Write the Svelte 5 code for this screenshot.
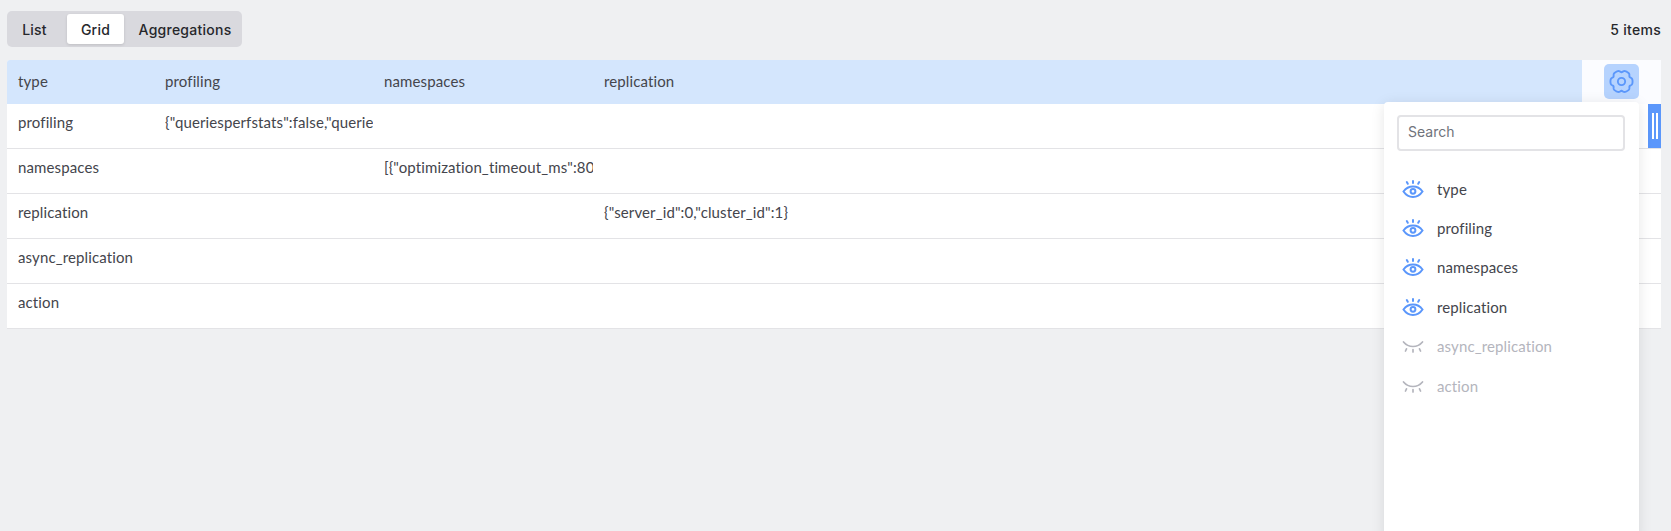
<script lang="ts">
  // columns actually visible in the grid, in display order
  const columns = [
    { name: 'type', visible: true },
    { name: 'profiling', visible: true },
    { name: 'namespaces', visible: true },
    { name: 'replication', visible: true },
    { name: 'async_replication', visible: false },
    { name: 'action', visible: false },
  ]

  const rows = [
    ['profiling', '{"queriesperfstats":false,"querie', '', ''],
    ['namespaces', '', '[{"optimization_timeout_ms":80', ''],
    ['replication', '', '', '{"server_id":0,"cluster_id":1}'],
    ['async_replication', '', '', ''],
    ['action', '', '', ''],
  ]

  let activeTab = $state('Grid')
  const tabs = ['List', 'Grid', 'Aggregations']

  // cog outline: 6 round teeth with narrow notches between them
  const cogPath = (() => {
    const pts: string[] = []
    for (let i = 0; i < 144; i++) {
      const a = (i / 144) * Math.PI * 2
      const notch = Math.pow((1 - Math.cos(a * 6)) / 2, 3)
      const r = 10.6 - 1.7 * notch
      pts.push(`${(12 + r * Math.cos(a)).toFixed(2)} ${(12 + r * Math.sin(a)).toFixed(2)}`)
    }
    return 'M' + pts.join('L') + 'Z'
  })()
</script>

<div class="page">
  <div class="toolbar">
    <div class="tabs">
      {#each tabs as t}
        <button class="tab" class:active={activeTab === t} onclick={() => (activeTab = t)}>{t}</button>
      {/each}
    </div>
    <span class="count">5 items</span>
  </div>

  <div class="table">
    <div class="head">
      <div class="row-grid head-cells">
        {#each columns.filter(c => c.visible) as c}
          <div class="cell">{c.name}</div>
        {/each}
      </div>
      <div class="gear-cell">
        <button class="gear-btn" aria-label="Columns">
          <svg viewBox="0 0 24 24" width="25" height="25" fill="none" stroke="#5b97fb" stroke-width="1.8">
            <path d={cogPath} stroke-linejoin="round" />
            <circle cx="12" cy="12" r="3.500" />
          </svg>
        </button>
      </div>
    </div>

    {#each rows as row}
      <div class="row-grid body-row">
        {#each row as value}
          <div class="cell"><span class="clip">{value}</span></div>
        {/each}
      </div>
    {/each}

    <div class="resize-handle"><i></i><i></i></div>

    <div class="popup">
      <input class="search" placeholder="Search" />
      <ul class="col-list">
        {#each columns as c}
          <li class:off={!c.visible}>
            {#if c.visible}
              <svg viewBox="0 0 22 18" width="22" height="18" fill="none" stroke="#5b97fb" stroke-width="2" stroke-linecap="round">
                <path d="M1.500 11.500C4 8 7.200 6.500 11 6.500s7 1.500 9.500 5C18 15.200 14.800 17 11 17s-7-1.800-9.500-5.500Z" />
                <circle cx="11" cy="11.300" r="2.400" />
                <path d="M11 1v2M4.800 2l1 1.800M17.200 2l-1 1.800" />
              </svg>
            {:else}
              <svg viewBox="0 0 22 18" width="22" height="18" fill="none" stroke="#b4b5bd" stroke-width="1.7" stroke-linecap="round">
                <path d="M1.500 5C4 8 7.200 9.500 11 9.500S18 8 20.500 5" />
                <path d="M11 12.500v2.500M4.500 11.800l-1 2.200M17.500 11.800l1 2.200" />
              </svg>
            {/if}
            <span>{c.name}</span>
          </li>
        {/each}
      </ul>
    </div>
  </div>
</div>

<style>
  :global(body) {
    background: #eff0f2;
    overflow: hidden;
  }

  .page {
    height: 531px;
    overflow: hidden;
    padding: 11px 10px 0 7px;
    box-sizing: border-box;
    font-family: Inter, "Liberation Sans", sans-serif;
    font-size: 14px;
    color: #26272b;
  }

  /* ===== Toolbar ===== */
  .toolbar {
    display: flex;
    align-items: center;
    justify-content: space-between;
    margin-bottom: 13px;
  }

  .tabs {
    display: flex;
    padding: 3px;
    background: #d9d9de;
    border-radius: 5px;
    height: 36px;
    box-sizing: border-box;
  }

  .tab {
    border: none;
    background: none;
    font: inherit;
    font-weight: 500;
    letter-spacing: 0.25px;
    color: #26272b;
    width: 57px;
    padding: 0;
    border-radius: 3px;
  }

  .tab:first-child {
    padding-right: 8px;
  }

  .tab:last-child {
    width: 115px;
    padding-left: 7px;
  }

  .tab.active {
    background: #fff;
    box-shadow: 0 1px 3px rgba(0, 0, 0, 0.12);
  }

  .count {
    font-weight: 500;
    letter-spacing: 0.3px;
  }

  /* ===== Table ===== */
  .table {
    position: relative;
    background: #fff;
    border-radius: 3px 3px 0 0;
    font-family: Lato, sans-serif;
    font-size: 15px;
    letter-spacing: 0.12px;
    color: #44454c;
  }

  .head {
    display: flex;
    height: 44px;
  }

  .row-grid {
    display: grid;
    grid-template-columns: 147px 219px 220px 1fr;
    align-items: start;
  }

  .head-cells {
    flex: 1;
    background: #d4e6fd;
    border-radius: 3px 0 0 0;
    padding-top: 12px;
  }

  .gear-cell {
    width: 79px;
    flex-shrink: 0;
    background: #fbfcff;
    box-sizing: border-box;
    padding: 4px 0 0 22px;
  }

  .gear-btn {
    display: flex;
    align-items: center;
    justify-content: center;
    width: 35px;
    height: 35px;
    padding: 0;
    border: none;
    border-radius: 5px;
    background: #b6d3fe;
  }

  .body-row {
    height: 45px;
    padding-top: 9px;
    border-bottom: 1px solid #e3e3e6;
    box-sizing: border-box;
  }

  .cell {
    padding-left: 11px;
    min-width: 0;
  }

  .clip {
    display: block;
    overflow: hidden;
    white-space: nowrap;
  }

  .resize-handle {
    position: absolute;
    top: 44px;
    right: 0;
    width: 13px;
    height: 44px;
    background: #5b97fb;
    display: flex;
    justify-content: center;
    align-items: center;
    gap: 2px;
  }

  .resize-handle i {
    width: 2px;
    height: 26px;
    background: #fff;
  }

  /* ===== Column popup ===== */
  .popup {
    position: absolute;
    top: 42px;
    right: 22px;
    width: 255px;
    height: 440px;
    box-sizing: border-box;
    padding: 13px 14px 0 13px;
    background: #fff;
    border-radius: 4px;
    box-shadow: 0 2px 14px rgba(0, 0, 0, 0.1);
  }

  .search {
    display: block;
    width: 100%;
    height: 36px;
    box-sizing: border-box;
    padding: 0 9px 3px;
    border: 2px solid #e3e3e6;
    border-radius: 4px;
    font: 14px Inter, sans-serif;
    outline: none;
  }

  .search::placeholder {
    color: #70737b;
  }

  .col-list {
    list-style: none;
    margin: 18px 0 0;
    padding: 0 0 0 5px;
  }

  .col-list li {
    display: flex;
    align-items: center;
    gap: 13px;
    height: 39.400px;
  }

  .col-list li.off {
    color: #b4b5bd;
  }
</style>
